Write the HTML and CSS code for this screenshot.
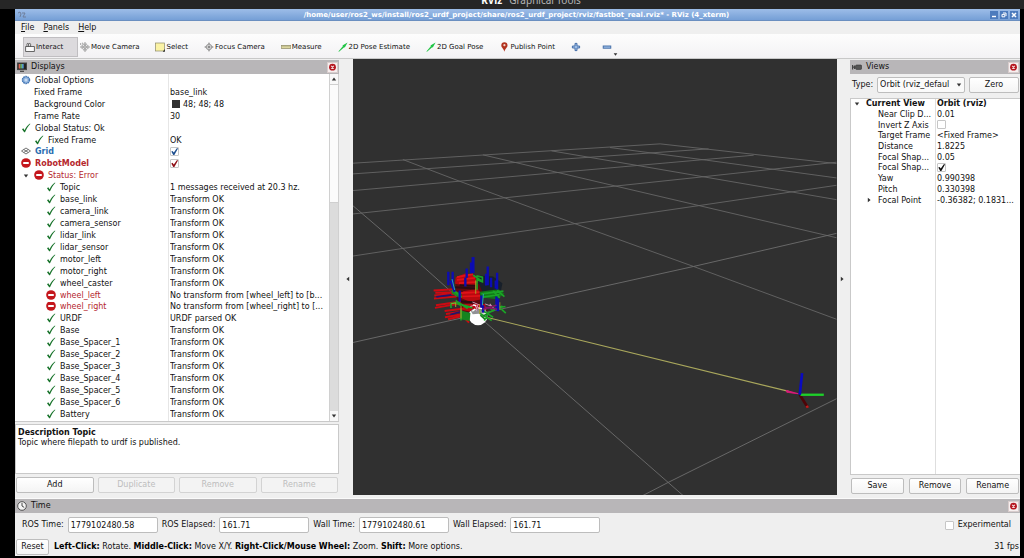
FILE: index.html
```
<!DOCTYPE html>
<html lang="en">
<head>
<meta charset="utf-8">
<title>RViz (4_xterm)</title>
<link rel="stylesheet" href="styles.css">
</head>
<body>
<svg class="defs" aria-hidden="true">
  <symbol id="ok" viewBox="0 0 10 10"><path d="M1 6.2 2.3 5.2 3.6 7.2C5 4.4 6.8 2 9 .6L9.3 1C7 3.2 5.4 6 4 9.2H3.2Z" fill="#17732a"/></symbol>
  <symbol id="err" viewBox="0 0 12 12"><circle cx="6" cy="6" r="5.8" fill="#c4161c"/><rect x="2.6" y="4.7" width="6.8" height="2.6" rx=".6" fill="#fff"/></symbol>
  <symbol id="close" viewBox="0 0 11 11"><rect x=".5" y=".5" width="10" height="10" fill="#f6efef" stroke="#d8cccc"/><circle cx="5.5" cy="5.2" r="3.4" fill="#b5161f"/><path d="M4.2 3.9 6.8 6.5M6.8 3.9 4.2 6.5" stroke="#f3dcdc" stroke-width="1.1"/></symbol>
  <symbol id="down" viewBox="0 0 6 6"><path d="M.8 1.6h4.4L3 4.6Z" fill="#333"/></symbol>
  <symbol id="right" viewBox="0 0 6 6"><path d="M1.8 .8v4.4L4.6 3Z" fill="#333"/></symbol>
  <symbol id="pose" viewBox="0 0 10 10"><path d="M.4 9.4 5 4 4.4 3.6 9.6.6 6.8 5.6 6.2 5.2 1 9.8Z" fill="#22c545"/></symbol>
</svg>

<header class="slide">
  <strong class="slide-name">RViz</strong><span class="slide-topic">Graphical Tools</span>
</header>

<main class="window">
  <div class="titlebar">
    <svg class="title-icon" viewBox="0 0 10 8"><path d="M1 2 3 1 4 3 3 6M5 2h3L6 6h3" fill="none" stroke="#6f7f9c"/></svg>
    <h1 class="title">/home/user/ros2_ws/install/ros2_urdf_project/share/ros2_urdf_project/rviz/fastbot_real.rviz* - RViz (4_xterm)</h1>
    <div class="title-actions">
      <button aria-label="Minimize"><svg viewBox="0 0 8 8"><path d="M2 5.5h4" stroke="#fff" stroke-width="1.4"/></svg></button>
      <button aria-label="Maximize"><svg viewBox="0 0 8 8"><path d="M3 2h3v3M2 3.4h2.8v2.4H2Z" fill="none" stroke="#fff"/></svg></button>
      <button aria-label="Close"><svg viewBox="0 0 8 8"><path d="m2 2 4 4M6 2 2 6" stroke="#fff" stroke-width="1.5"/></svg></button>
    </div>
  </div>

  <nav class="menubar">
    <button><u>F</u>ile</button><button><u>P</u>anels</button><button><u>H</u>elp</button>
  </nav>

  <div class="toolbar">
    <button class="tool is-active"><svg class="tool-icon" viewBox="0 0 10 10"><path d="M.6 4.5h8.8v5H.6ZM2 4.5V2.2a.8.8 0 0 1 1.6 0V4.5M3.6 2.6 4.4 1.4a1 1 0 0 1 1.2.8V4.5" fill="#fafafa" stroke="#444" stroke-width=".8"/></svg>Interact</button>
    <button class="tool"><svg class="tool-icon" viewBox="0 0 10 10"><path d="M5 .4 6.6 2.4H5.6V4.4H7.6V3.4L9.6 5 7.6 6.6V5.6H5.6V7.6H6.6L5 9.6 3.4 7.6H4.4V5.6H2.4V6.6L.4 5 2.4 3.4V4.4H4.4V2.4H3.4Z" fill="#ddd" stroke="#777" stroke-width=".6"/><path d="M.6 1v2M2.4.6v2" stroke="#777" stroke-width=".6"/></svg>Move Camera</button>
    <button class="tool"><svg class="tool-icon" viewBox="0 0 10 10"><rect x=".5" y="1" width="9" height="8" fill="#fbf3a5" stroke="#8d8a68" stroke-width=".7"/><path d="M9.8 7v2.8H7.8Z" fill="#222"/></svg>Select</button>
    <button class="tool"><svg class="tool-icon" viewBox="0 0 10 10"><circle cx="5" cy="5" r="2.8" fill="#ccc" stroke="#888" stroke-width=".7"/><path d="M5 0 6.3 2.4H3.7ZM5 10 6.3 7.6H3.7ZM0 5 2.4 3.7V6.3ZM10 5 7.6 3.7V6.3Z" fill="#999"/><circle cx="5" cy="5" r="1" fill="#777"/></svg>Focus Camera</button>
    <button class="tool"><svg class="tool-icon" viewBox="0 0 10 10"><rect x=".2" y="3.4" width="9.6" height="3.2" fill="#dcd7a0" stroke="#8f8b68" stroke-width=".7"/><path d="M2 3.6v1.4M4 3.6v1.4M6 3.6v1.4M8 3.6v1.4" stroke="#8f8b68" stroke-width=".5"/></svg>Measure</button>
    <button class="tool"><svg class="tool-icon"><use href="#pose"/></svg>2D Pose Estimate</button>
    <button class="tool"><svg class="tool-icon"><use href="#pose"/></svg>2D Goal Pose</button>
    <button class="tool"><svg class="tool-icon" viewBox="0 0 10 10"><path d="M5.4.3A3.1 3.1 0 0 1 8.5 3.4C8.5 5.4 6 6.6 5.4 9.8 4.8 6.6 2.3 5.4 2.3 3.4A3.1 3.1 0 0 1 5.4.3Z" fill="#b23320"/><circle cx="5.4" cy="3.2" r="1.1" fill="#f0d4ca"/></svg>Publish Point</button>
    <button class="tool tool-plain" aria-label="Add tool"><svg class="tool-icon" viewBox="0 0 10 10"><path d="M4 1.4h2V4h2.6v2H6v2.6H4V6H1.4V4H4Z" fill="#9dbde6" stroke="#3d68a4" stroke-width=".9"/></svg></button>
    <button class="tool tool-plain" aria-label="Remove tool"><svg class="tool-icon" viewBox="0 0 10 10"><rect x="1.2" y="4" width="7.6" height="2.2" fill="#9dbde6" stroke="#3d68a4" stroke-width=".9"/></svg><svg class="tool-more"><use href="#down"/></svg></button>
  </div>

  <div class="workspace">
    <section class="panel displays">
      <h2 class="panel-head"><svg class="panel-icon" viewBox="0 0 10 10"><rect x=".5" y="1" width="9" height="6.6" fill="#222" stroke="#444"/><path d="M1.6 2h1.7v4.6H1.6Z" fill="#d65"/><path d="M3.3 2H5v4.6H3.3Z" fill="#6a6"/><path d="M5 2h1.7v4.6H5Z" fill="#59c"/><path d="M3 9.3h4" stroke="#333"/></svg>Displays<button class="close" aria-label="Close Displays"><svg><use href="#close"/></svg></button></h2>
      <div class="tree-box">
        <table class="tree tree-displays">
          <colgroup><col class="col-name"><col></colgroup>
          <tbody>
          <tr><td class="l1"><svg class="ico" viewBox="0 0 10 10"><circle cx="5" cy="5" r="3.5" fill="#8fb3de" stroke="#4477b4" stroke-width="1.5" stroke-dasharray="1.6 .6"/><circle cx="5" cy="5" r="1.5" fill="#c9dcf2"/></svg>Global Options</td><td></td></tr>
          <tr><td class="l1 noicon">Fixed Frame</td><td>base_link</td></tr>
          <tr><td class="l1 noicon">Background Color</td><td><span class="swatch"></span>48; 48; 48</td></tr>
          <tr><td class="l1 noicon">Frame Rate</td><td>30</td></tr>
          <tr><td class="l1"><svg class="ico"><use href="#ok"/></svg>Global Status: Ok</td><td></td></tr>
          <tr><td class="l2"><svg class="ico"><use href="#ok"/></svg>Fixed Frame</td><td>OK</td></tr>
          <tr><td class="l1 grid-name"><svg class="ico" viewBox="0 0 10 10"><path d="m5 2 4.5 3L5 8 .5 5ZM2.7 3.5l4.6 3M7.3 3.5l-4.6 3" fill="none" stroke="#555" stroke-width=".8"/></svg>Grid</td><td><input class="check blue" type="checkbox" aria-label="Grid" checked></td></tr>
          <tr><td class="l1 error strong"><svg class="ico"><use href="#err"/></svg>RobotModel</td><td><input class="check red" type="checkbox" aria-label="RobotModel" checked></td></tr>
          <tr><td class="l1x error"><svg class="twist"><use href="#down"/></svg><svg class="ico"><use href="#err"/></svg>Status: Error</td><td></td></tr>
          <tr><td class="l3"><svg class="ico"><use href="#ok"/></svg>Topic</td><td>1 messages received at 20.3 hz.</td></tr>
          <tr><td class="l3"><svg class="ico"><use href="#ok"/></svg>base_link</td><td>Transform OK</td></tr>
          <tr><td class="l3"><svg class="ico"><use href="#ok"/></svg>camera_link</td><td>Transform OK</td></tr>
          <tr><td class="l3"><svg class="ico"><use href="#ok"/></svg>camera_sensor</td><td>Transform OK</td></tr>
          <tr><td class="l3"><svg class="ico"><use href="#ok"/></svg>lidar_link</td><td>Transform OK</td></tr>
          <tr><td class="l3"><svg class="ico"><use href="#ok"/></svg>lidar_sensor</td><td>Transform OK</td></tr>
          <tr><td class="l3"><svg class="ico"><use href="#ok"/></svg>motor_left</td><td>Transform OK</td></tr>
          <tr><td class="l3"><svg class="ico"><use href="#ok"/></svg>motor_right</td><td>Transform OK</td></tr>
          <tr><td class="l3"><svg class="ico"><use href="#ok"/></svg>wheel_caster</td><td>Transform OK</td></tr>
          <tr><td class="l3 error"><svg class="ico"><use href="#err"/></svg>wheel_left</td><td>No transform from [wheel_left] to [b...</td></tr>
          <tr><td class="l3 error"><svg class="ico"><use href="#err"/></svg>wheel_right</td><td>No transform from [wheel_right] to [...</td></tr>
          <tr><td class="l3"><svg class="ico"><use href="#ok"/></svg>URDF</td><td>URDF parsed OK</td></tr>
          <tr><td class="l3"><svg class="ico"><use href="#ok"/></svg>Base</td><td>Transform OK</td></tr>
          <tr><td class="l3"><svg class="ico"><use href="#ok"/></svg>Base_Spacer_1</td><td>Transform OK</td></tr>
          <tr><td class="l3"><svg class="ico"><use href="#ok"/></svg>Base_Spacer_2</td><td>Transform OK</td></tr>
          <tr><td class="l3"><svg class="ico"><use href="#ok"/></svg>Base_Spacer_3</td><td>Transform OK</td></tr>
          <tr><td class="l3"><svg class="ico"><use href="#ok"/></svg>Base_Spacer_4</td><td>Transform OK</td></tr>
          <tr><td class="l3"><svg class="ico"><use href="#ok"/></svg>Base_Spacer_5</td><td>Transform OK</td></tr>
          <tr><td class="l3"><svg class="ico"><use href="#ok"/></svg>Base_Spacer_6</td><td>Transform OK</td></tr>
          <tr><td class="l3"><svg class="ico"><use href="#ok"/></svg>Battery</td><td>Transform OK</td></tr>
          </tbody>
        </table>
        <div class="scrollbar"><svg class="arrow flip"><use href="#down"/></svg><div class="thumb"></div><div class="track"></div><svg class="arrow"><use href="#down"/></svg></div>
      </div>
      <div class="description"><strong>Description Topic</strong><br>Topic where filepath to urdf is published.</div>
      <div class="actions">
        <button class="btn">Add</button><button class="btn" disabled>Duplicate</button><button class="btn" disabled>Remove</button><button class="btn" disabled>Rename</button>
      </div>
    </section>

    <div class="handle handle-left"><svg class="arrow flip"><use href="#right"/></svg></div>

    <svg class="viewport" viewBox="0 0 484 435" preserveAspectRatio="xMidYMid slice" role="img" aria-label="3D view of the robot on a grid">
      <g transform="translate(-13 71) scale(.3333)" fill="none">
        <g stroke="#686868" stroke-width="2.6">
          <path d="M39 99 960 41 1488 100M39 131 1105 56M39 181 1240 75M810 52 1100 90 1488 143M635 62 900 107 1488 208"/>
          <path d="M39 251 490 203 1085 140 1488 96M39 377 190 354 705 280 1075 226 1488 165M430 74 825 167 1488 322M190 88 360 153 705 280 1060 408 1488 566"/>
        </g>
        <path d="M39 636 500 532 1060 408 1488 309M900 1098 985 1054 1488 804M39 225 190 354 440 578 1036 1100" stroke="#707070" stroke-width="2.6"/>
        <path d="M440 560 1345 782" stroke="#a9a75c" stroke-width="3.4"/>
        <path d="m1338 779 36 10-34-4Z" fill="#d81b78" stroke="#d81b78" stroke-width="3"/>
        <path d="M1378 792 1402 830" stroke="#4c0508" stroke-width="8"/>
        <path d="m1399 825 3 6" stroke="#c01c1c" stroke-width="8"/>
        <path d="M1380 792h70" stroke="#1ed02a" stroke-width="7"/>
        <path d="M1378 792 1385 727" stroke="#0a0ac0" stroke-width="8"/>
        <g transform="translate(240 330)">
          <path d="M180 105 220 108 248 128 242 160 190 162 160 120Z" fill="#18202a"/>
          <path d="M108 128 140 138 178 130 190 160 186 194 206 210 176 214 130 214 112 180Z" fill="#5c0b10"/>
          <circle cx="175" cy="226" r="28" fill="#fff"/>
          <path d="m150 205 50 0-5 13-36 3Z" fill="#909294"/>
          <path d="M108 110 138 98 166 104 172 135 140 136 106 130ZM130 152 175 145 186 176 150 184 122 172ZM135 190 195 190 202 206 160 205 150 213 128 208Z" fill="#b8090f"/>
          <path d="M112 110 160 101M112 118 166 112M118 128 175 124M122 158 180 155M128 168 182 166" stroke="#e01218" stroke-width="5"/>
          <path d="m106 140 60 4M112 182l50 3M120 134l50 2" stroke="#2a0d12" stroke-width="6"/>
          <path d="M42 150 104 146M47 157 110 155M44 165 104 160M43 174 110 168M49 194 124 183M46 202 116 190M75 211 134 204M79 220 130 213M76 230 140 219M85 236 128 226M128 226l20 20" stroke="#cc0a12" stroke-width="6"/>
          <path d="M50 169 95 163M92 222l36-10" stroke="#23126f" stroke-width="5"/>
          <path d="m124 210 28 7-2 24-25-4Z" fill="#15841f"/>
          <path d="m180 154 56-8 18 14-22 16-50-6Z" fill="#127719"/>
          <path d="m96 146 30 14-4 14-26-16Z" fill="#1b8c23"/>
          <path d="M160 104l24 16M170 106l18 4v14l-16-6v30M104 152l22 18M185 160l66-8M190 170l50-8M232 150l22 18M220 152l20 20M108 180l36 24M94 202v-13l14-2 16 8M118 190l40 12M186 208l34 22M180 218l36 22M212 206l45-8M228 190l30 28M194 240l10-22 44-22M124 206v34" stroke="#1ba426" stroke-width="5"/>
          <path d="M124 196v38M94 190l14-3v12M168 120v40M180 190v30M240 185v22" stroke="#a7a32a" stroke-width="3"/>
          <path d="M160 50v48" stroke="#0c0cb4" stroke-width="9"/>
          <path d="M154 66v32M86 94v40M99 94v46M93 120l12 34M141 84v28M204 78v56M199 100v35M232 97v50M228 120v24M137 112v26M120 150v34M230 168v42M235 174v38M185 165v38M214 112v28M190 194v22" stroke="#0c0cb4" stroke-width="7"/>
          <path d="M97 116l8 32M191 160l-3 34" stroke="#26a1b5" stroke-width="3"/>
          <path d="m152 198 14-5 5 12M158 184l20 9M196 190l24 9M170 212l4-18M210 190l14 16" stroke="#d797bd" stroke-width="3"/>
          <path d="m160 193 10 3M175 202l12 2M158 212l9-7" stroke="#fff" stroke-width="4"/>
          <path d="M190 206l40-12M196 200l36 6" stroke="#861568" stroke-width="5"/>
          <path d="M182 224l14 12M190 226l12-6" stroke="#168222" stroke-width="5"/>
        </g>
      </g>
    </svg>

    <div class="handle"><svg class="arrow"><use href="#right"/></svg></div>

    <section class="panel views">
      <h2 class="panel-head"><svg class="panel-icon" viewBox="0 0 10 10"><path d="M.6 3v4.4M.6 5.2h3M2.6 3.4v3.6" stroke="#444" stroke-width="1.2"/><rect x="3.6" y="3" width="6" height="4.4" rx="1" fill="#555" stroke="#333" stroke-width=".6"/></svg>Views<button class="close" aria-label="Close Views"><svg><use href="#close"/></svg></button></h2>
      <div class="type-row">
        <label for="type">Type:</label>
        <div class="select"><select id="type"><option>Orbit (rviz_defaul</option></select><svg class="select-arrow"><use href="#down"/></svg></div>
        <button class="btn">Zero</button>
      </div>
      <div class="tree-box">
        <table class="tree tree-views">
          <colgroup><col class="col-name"><col></colgroup>
          <tbody>
          <tr class="strong"><td class="v0"><svg class="twist"><use href="#down"/></svg>Current View</td><td>Orbit (rviz)</td></tr>
          <tr><td class="v1">Near Clip D...</td><td>0.01</td></tr>
          <tr><td class="v1">Invert Z Axis</td><td><input class="check" type="checkbox" aria-label="Invert Z Axis"></td></tr>
          <tr><td class="v1">Target Frame</td><td>&lt;Fixed Frame&gt;</td></tr>
          <tr><td class="v1">Distance</td><td>1.8225</td></tr>
          <tr><td class="v1">Focal Shap...</td><td>0.05</td></tr>
          <tr><td class="v1">Focal Shap...</td><td><input class="check" type="checkbox" aria-label="Focal Shape Fixed Size" checked></td></tr>
          <tr><td class="v1">Yaw</td><td>0.990398</td></tr>
          <tr><td class="v1">Pitch</td><td>0.330398</td></tr>
          <tr><td class="v1x"><svg class="twist"><use href="#right"/></svg>Focal Point</td><td>-0.36382; 0.1831...</td></tr>
          </tbody>
        </table>
      </div>
      <div class="actions">
        <button class="btn">Save</button><button class="btn">Remove</button><button class="btn">Rename</button>
      </div>
    </section>
  </div>

  <section class="time">
    <h2 class="panel-head"><svg class="panel-icon" viewBox="0 0 10 10"><circle cx="5" cy="5" r="4.3" fill="#f4f4f4" stroke="#444" stroke-width=".9"/><path d="M5 2v3l2.2 1.4" fill="none" stroke="#333" stroke-width=".9"/></svg>Time<button class="close" aria-label="Close Time"><svg><use href="#close"/></svg></button></h2>
    <div class="time-row">
      <label for="rt">ROS Time:</label><input class="field" id="rt" value="1779102480.58">
      <label for="re">ROS Elapsed:</label><input class="field" id="re" value="161.71">
      <label for="wt">Wall Time:</label><input class="field" id="wt" value="1779102480.61">
      <label for="we">Wall Elapsed:</label><input class="field" id="we" value="161.71">
      <label class="experimental"><input class="check" type="checkbox">Experimental</label>
    </div>
  </section>

  <footer class="status">
    <button class="btn reset">Reset</button>
    <p class="hints"><b>Left-Click:</b> Rotate. <b>Middle-Click:</b> Move X/Y. <b>Right-Click/Mouse Wheel:</b> Zoom. <b>Shift:</b> More options.</p>
    <span class="fps">31 fps</span>
  </footer>
</main>
</body>
</html>
```

FILE: styles.css
```
* { box-sizing: border-box; }

body {
  margin: 0;
  min-height: 100vh;
  display: flex;
  flex-direction: column;
  padding: 0 4px 3px 15px;
  background: #000;
  color: #111;
  font: 8px/10px "DejaVu Sans", sans-serif;
}

button, input, select { font: inherit; color: inherit; margin: 0; }
button { border: 0; padding: 0; background: none; }
svg { display: block; flex: none; }
.defs { position: absolute; width: 0; height: 0; }

.slide {
  height: 9px;
  margin: 0 -4px 0 -15px;
  display: flex;
  justify-content: center;
  align-items: flex-end;
  gap: 7px;
  padding: 0 0 3px 38px;
  overflow: hidden;
  background: #262626;
  color: #b4b4b4;
  font: 10px/12px "Noto Sans", sans-serif;
}
.slide-name { color: #fff; }

.window {
  flex: 1;
  display: flex;
  flex-direction: column;
  background: #efefef;
}

.titlebar {
  height: 12px;
  display: flex;
  align-items: center;
  padding: 0 2px;
  background: linear-gradient(#9dbde8, #759fd6);
  border-bottom: 1px solid #6a8fc0;
}
.title-icon { width: 10px; height: 8px; }
.title {
  flex: 1;
  margin: 0;
  padding-left: 16px;
  text-align: center;
  font-size: 7px;
  line-height: 10px;
  color: #fff;
  white-space: nowrap;
}
.title-actions { display: flex; gap: 2px; }
.title-actions button { width: 8px; height: 8px; background: #4c7bbd; }
.title-actions svg { width: 8px; height: 8px; }

.menubar {
  height: 13px;
  display: flex;
  align-items: center;
  gap: 9px;
  padding: 0 6px;
}

.toolbar {
  height: 25px;
  display: flex;
  align-items: center;
  padding: 1px 8px 0;
  background: linear-gradient(#fdfdfd, #f3f2f4);
  border-bottom: 1px solid #c8c8c8;
  font-size: 7px;
}
.tool {
  height: 20px;
  display: flex;
  align-items: center;
  gap: 1px;
  padding: 0 14px 0 2px;
  white-space: nowrap;
}
.tool.is-active { min-width: 55px; background: #dcdadd; box-shadow: inset 0 0 0 1px #c0bec1; }
.tool-icon { width: 10px; height: 10px; }
.tool-plain { padding-right: 19px; }
.tool-more { width: 5px; height: 5px; align-self: flex-end; }

.workspace {
  flex: 1;
  display: flex;
  min-height: 0;
}
.panel { display: flex; flex-direction: column; padding-top: 1px; }
.displays { width: 324px; }
.views { width: 170px; }

.panel-head {
  height: 14px;
  margin: 0;
  display: flex;
  align-items: center;
  gap: 4px;
  padding: 0 1px 0 2px;
  background: #b8b6b8;
  font-size: 8px;
  font-weight: normal;
}
.panel-icon { width: 10px; height: 10px; }
.close { margin-left: auto; }
.close svg { width: 11px; height: 11px; }

.tree-box {
  flex: 1;
  display: flex;
  align-items: flex-start;
  border: 1px solid #c9c9c9;
  border-width: 0 0 1px 1px;
}
.displays .tree-box { border-left: 0; background: linear-gradient(#e6e6e6, #e6e6e6) 153px 0 / 1px 100% no-repeat #fff; }
.views .tree-box { border-top-width: 1px; background: linear-gradient(#dedede, #dedede) 84px 0 / 1px 100% no-repeat #fff; }
.tree {
  flex: 1;
  table-layout: fixed;
  border-collapse: collapse;
  white-space: nowrap;
}
.tree td { padding: 0; line-height: 10px; vertical-align: middle; overflow: hidden; }
.tree-displays { height: 346px; margin-top: 1px; }
.tree-displays .col-name { width: 155px; }
.tree-views { height: 107px; }
.tree-views .col-name { width: 86px; }

.ico, .twist { display: inline-block; vertical-align: middle; }
.ico { width: 10px; height: 10px; margin: -1px 4px 0 0; }
.twist { width: 6px; height: 6px; margin-right: 6px; }
.tree .l1 { padding-left: 6px; }
.tree .l1.noicon { padding-left: 19px; }
.tree .l1x { padding-left: 8px; }
.tree .l1x .twist { margin-right: 5px; }
.tree .l2 { padding-left: 19px; }
.tree .l3 { padding-left: 31px; }
.tree .v0 { padding-left: 3px; }
.tree .v1 { padding-left: 27px; }
.tree .v1x { padding-left: 15px; }
.error { color: #b5272d; }
.strong { font-weight: bold; }
.grid-name { color: #2a6db0; font-weight: bold; }
.swatch {
  display: inline-block;
  width: 8px;
  height: 8px;
  margin: 0 3px 0 2px;
  vertical-align: middle;
  background: #303030;
}

.check {
  appearance: none;
  display: inline-grid;
  width: 9px;
  height: 9px;
  vertical-align: middle;
  background: #fff;
  border: 1px solid #c6c6c6;
  border-radius: 1px;
}
.tree .check { margin-top: -1px; }
.check:checked::before {
  content: "";
  background: #111;
  clip-path: polygon(4% 50%, 22% 42%, 40% 64%, 86% 0, 100% 8%, 48% 100%, 32% 100%);
}
.check.blue:checked::before { background: #1f4f8f; }
.check.red:checked::before { background: #8f1017; }

.scrollbar {
  align-self: stretch;
  width: 10px;
  display: flex;
  flex-direction: column;
  align-items: center;
  padding: 2px 0;
  background: #f8f8f8;
  border: 1px solid #d0d0d0;
  border-width: 0 1px;
}
.arrow { width: 6px; height: 6px; }
.flip { transform: rotate(180deg); }
.thumb { flex: 118; width: 8px; margin-top: 2px; background: #fbfbfb; border: solid #cfcfcf; border-width: 1px 0; }
.track { flex: 210; width: 8px; margin-bottom: 2px; background: #dcdcdc; }

.description {
  height: 50px;
  margin-top: 2px;
  padding: 3px 2px;
  background: #fff;
  border: 1px solid #c9c9c9;
}
.actions {
  display: flex;
  gap: 4px;
  padding: 3px 1px 5px;
}
.btn {
  flex: 1;
  height: 16px;
  background: linear-gradient(#fff, #f4f4f4);
  border: 1px solid #bdbdbd;
  border-radius: 2px;
}
.btn:disabled { color: #bdbdbd; border-color: #d3d3d3; background: #f3f3f3; }

.handle {
  width: 13px;
  display: flex;
  align-items: center;
  padding-left: 2px;
}
.handle-left { width: 14px; justify-content: flex-end; padding: 0 2px 0 0; }
.viewport {
  flex: 1;
  align-self: stretch;
  min-width: 0;
  height: auto;
  margin-bottom: 3px;
  background: #303030;
}

.type-row {
  display: flex;
  align-items: center;
  gap: 4px;
  padding: 3px 1px 5px 2px;
}
.select { position: relative; width: 88px; }
.select select {
  appearance: none;
  display: block;
  width: 100%;
  height: 16px;
  padding: 0 2px;
  background: #fafafa;
  border: 1px solid #bdbdbd;
  border-radius: 2px;
}
.select-arrow { position: absolute; right: 3px; top: 5px; width: 6px; height: 6px; }
.views .actions { gap: 5px; padding-bottom: 4px; }

.time { border-top: 1px solid #fafafa; }
.time-row {
  display: flex;
  align-items: center;
  gap: 4px;
  padding: 4px 9px 5px 7px;
}
.field {
  width: 90px;
  height: 16px;
  padding: 0 2px;
  background: #fff;
  border: 1px solid #bdbdbd;
  border-radius: 2px;
}
.experimental { margin-left: auto; display: flex; align-items: center; gap: 4px; }

.status {
  display: flex;
  align-items: center;
  gap: 5px;
  padding: 1px;
}
.reset { flex: none; width: 33px; }
.hints { flex: 1; margin: 0; }
.hints b { color: #000; }
```
